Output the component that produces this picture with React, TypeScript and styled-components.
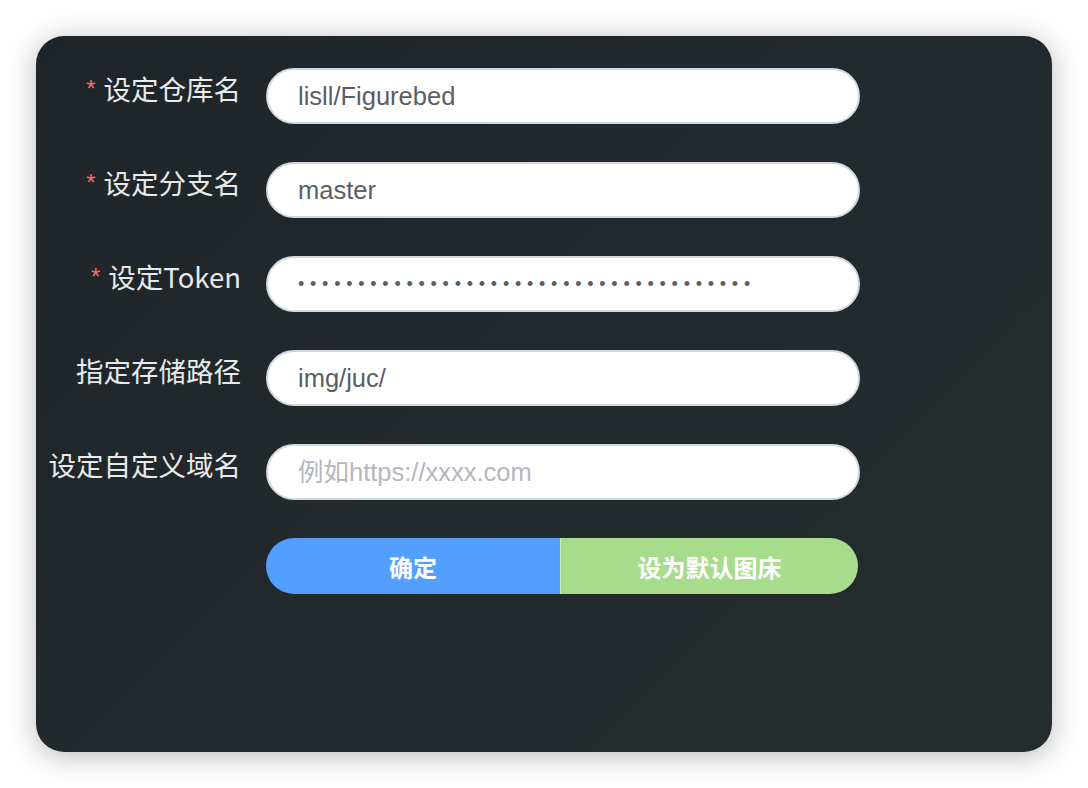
import React from "react";
import styled, { createGlobalStyle } from "styled-components";

const GlobalStyle = createGlobalStyle`
  html, body {
    margin: 0;
    padding: 0;
    background: #ffffff;
  }
  body {
    font-family: "Liberation Sans", "Noto Sans CJK SC", sans-serif;
  }
`;

const Page = styled.div`
  width: 1088px;
  height: 788px;
  padding: 36px;
  box-sizing: border-box;
`;

const Panel = styled.div`
  width: 1016px;
  height: 716px;
  border-radius: 28px;
  background: linear-gradient(135deg, #1e2427 0%, #232a2d 55%, #252c2e 100%);
  box-shadow: 0 4px 30px rgba(0, 0, 0, 0.28);
  padding-top: 32px;
  box-sizing: border-box;
`;

const Form = styled.form`
  display: flex;
  flex-direction: column;
  gap: 38px;
`;

const Row = styled.div`
  display: grid;
  grid-template-columns: 205px 594px;
  column-gap: 25px;
  align-items: start;
`;

const Label = styled.label`
  text-align: right;
  line-height: 40px;
  font-size: 27.5px;
  color: #e8e9ea;
  font-family: "Noto Sans CJK SC", "Liberation Sans", sans-serif;
  white-space: nowrap;
`;

const Star = styled.span`
  color: #f56c6c;
  font-size: 24px;
  margin-right: 8px;
  position: relative;
  top: -3px;
  font-family: "Liberation Sans", sans-serif;
`;

const Input = styled.input<{ $dots?: boolean }>`
  width: 100%;
  height: 56px;
  box-sizing: border-box;
  border: 2px solid #d4d8de;
  border-radius: 28px;
  background: #ffffff;
  padding: 0 30px;
  outline: none;
  color: #5c5e63;
  font-size: ${(p) => (p.$dots ? "18px" : "25.5px")};
  letter-spacing: ${(p) => (p.$dots ? "5.75px" : "0")};
  font-family: "Liberation Sans", "Noto Sans CJK SC", sans-serif;

  &::placeholder {
    color: #b4b7be;
  }
`;

const Buttons = styled.div`
  display: flex;
  width: 592px;
  height: 56px;
  border-radius: 28px;
  overflow: hidden;
`;

const Btn = styled.button<{ $tone: "primary" | "success" }>`
  flex: ${(p) => (p.$tone === "primary" ? "0 0 294px" : "1")};
  border: none;
  border-left: ${(p) => (p.$tone === "success" ? "1px solid #c9ecb9" : "none")};
  background: ${(p) => (p.$tone === "primary" ? "#539fff" : "#a8dc8d")};
  color: #ffffff;
  font-size: 24px;
  font-weight: 700;
  font-family: "Noto Sans CJK SC", sans-serif;
  cursor: pointer;
  padding: 0;
`;

const fields = [
  { label: "设定仓库名", value: "lisll/Figurebed", required: true },
  { label: "设定分支名", value: "master", required: true },
  { label: "设定Token", value: "•".repeat(38), required: true, dots: true },
  { label: "指定存储路径", value: "img/juc/" },
  { label: "设定自定义域名", value: "", placeholder: "例如https://xxxx.com" },
];

export default function App() {
  return (
    <>
      <GlobalStyle />
      <Page>
        <Panel>
          <Form onSubmit={(e) => e.preventDefault()}>
            {fields.map((f) => (
              <Row key={f.label}>
                <Label>
                  {f.required && <Star>*</Star>}
                  {f.label}
                </Label>
                <Input
                  readOnly
                  value={f.value}
                  placeholder={f.placeholder}
                  $dots={f.dots}
                />
              </Row>
            ))}
            <Row>
              <span />
              <Buttons>
                <Btn type="button" $tone="primary">
                  确定
                </Btn>
                <Btn type="button" $tone="success">
                  设为默认图床
                </Btn>
              </Buttons>
            </Row>
          </Form>
        </Panel>
      </Page>
    </>
  );
}
